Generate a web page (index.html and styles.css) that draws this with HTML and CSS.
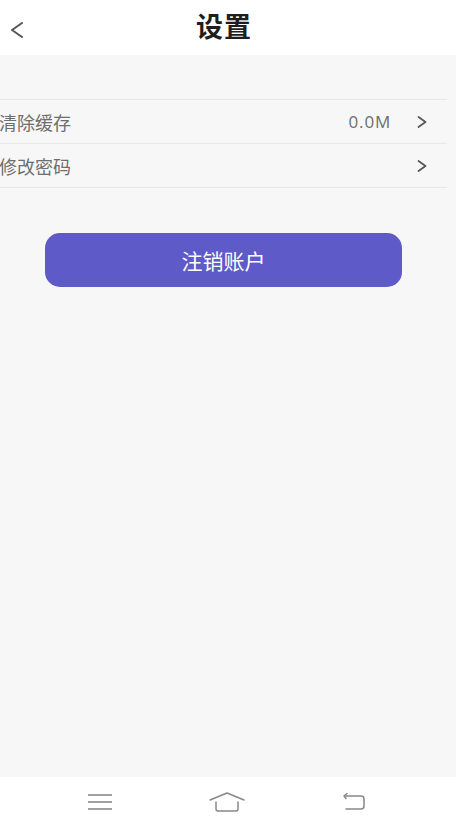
FILE: index.html
```html
<!DOCTYPE html>
<html lang="zh">
<head>
<meta charset="utf-8">
<title>设置</title>
<link rel="stylesheet" href="styles.css">
</head>
<body>
<div class="page">
  <header class="topbar">
    <span class="back">
      <svg width="14" height="16" viewBox="0 0 14 16"><polyline points="12,1 2,8 12,15" fill="none" stroke="#555" stroke-width="2" stroke-linecap="round" stroke-linejoin="round"/></svg>
    </span>
    <h1 class="title">设置</h1>
  </header>
  <main class="content">
    <ul class="list">
      <li class="row">
        <span class="label">清除缓存</span>
        <span class="value">0.0M</span>
        <svg class="chev" width="10" height="12" viewBox="0 0 10 12"><polyline points="1.5,1 8.5,6 1.5,11" fill="none" stroke="#555" stroke-width="1.7" stroke-linecap="round" stroke-linejoin="round"/></svg>
      </li>
      <li class="row">
        <span class="label">修改密码</span>
        <svg class="chev" width="10" height="12" viewBox="0 0 10 12"><polyline points="1.5,1 8.5,6 1.5,11" fill="none" stroke="#555" stroke-width="1.7" stroke-linecap="round" stroke-linejoin="round"/></svg>
      </li>
    </ul>
    <button class="logout">注销账户</button>
  </main>
  <nav class="sysnav">
    <svg width="24" height="18" viewBox="0 0 24 18"><g stroke="#888" stroke-width="1.6"><line x1="0" y1="2" x2="24" y2="2"/><line x1="0" y1="9" x2="24" y2="9"/><line x1="0" y1="16" x2="24" y2="16"/></g></svg>
    <svg width="36" height="20" viewBox="0 0 36 20"><g fill="none" stroke="#888" stroke-width="1.5" stroke-linejoin="round" stroke-linecap="round"><polyline points="1,8 18,1 35,8"/><path d="M7,10 V17 Q7,19 9,19 H27 Q29,19 29,17 V10"/></g></svg>
    <svg width="24" height="18" viewBox="0 0 24 18"><g fill="none" stroke="#888" stroke-width="1.5" stroke-linejoin="round" stroke-linecap="round"><path d="M3,3 H19 Q22,3 22,6 V13 Q22,16 19,16 H4"/><polyline points="5,0.5 2,3 4,5.5"/></g></svg>
  </nav>
</div>
</body>
</html>
```
FILE: styles.css
```css
* { box-sizing: border-box; }
html, body { margin: 0; padding: 0; }
body {
  background: #f7f7f7;
  font-family: "Noto Sans CJK SC", "Noto Sans", sans-serif;
}
.page {
  min-height: 826px;
  display: flex;
  flex-direction: column;
}
.topbar {
  height: 55px;
  background: #ffffff;
  display: flex;
  align-items: center;
  justify-content: center;
  position: relative;
}
.back {
  position: absolute;
  left: 10px;
  top: 22px;
  display: flex;
}
.title {
  margin: 0 8px 4px 0;
  font-size: 27px;
  font-weight: 700;
  color: #1e1e1e;
  line-height: 1;
  letter-spacing: 1px;
}
.content {
  flex: 1;
  display: flex;
  flex-direction: column;
}
.list {
  list-style: none;
  margin: 44px 9px 0 0;
  padding: 0;
  border-bottom: 1px solid #e7e7e7;
}
.row {
  height: 44px;
  border-top: 1px solid #e7e7e7;
  display: flex;
  align-items: center;
  padding: 0 20px 0 0;
}
.label {
  flex: 1;
  font-size: 18px;
  color: #6e6e6e;
  margin-left: -1px;
}
.value {
  font-family: "Open Sans", "Noto Sans", sans-serif;
  font-size: 17px;
  color: #6e6e6e;
  letter-spacing: 0.8px;
  margin-right: 26px;
}
.chev { display: block; }
.logout {
  margin: 45px 0 0 45px;
  width: 357px;
  height: 54px;
  border: none;
  border-radius: 15px;
  background: #5e5ac8;
  color: #ffffff;
  font-family: "Noto Sans CJK SC", sans-serif;
  font-size: 21px;
  padding: 0;
}
.sysnav {
  height: 49px;
  background: #ffffff;
  display: flex;
  align-items: center;
  justify-content: space-between;
  padding: 0 90px 0 88px;
}
.sysnav svg { display: block; }
```
